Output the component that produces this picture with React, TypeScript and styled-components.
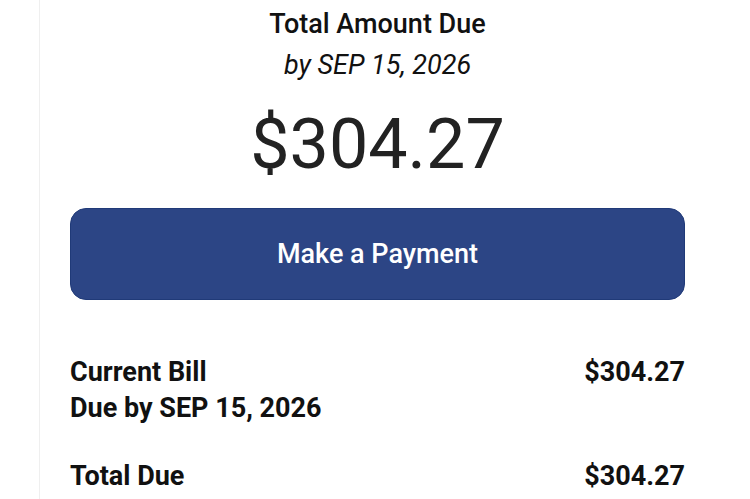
import styled, { createGlobalStyle } from 'styled-components';

const Global = createGlobalStyle`
    html, body {
        margin: 0;
        padding: 0;
        background: #ffffff;
    }
    body {
        font-family: Roboto, "Noto Sans", "Liberation Sans", sans-serif;
        color: #111111;
    }
`;

const Card = styled.div`
    box-sizing: border-box;
    margin-left: 39px;
    width: 676px;
    min-height: 499px;
    border-left: 1px solid #efefef;
    padding: 7px 30px 0 30px;
`;

const Summary = styled.section`
    display: flex;
    flex-direction: column;
    align-items: center;
`;

const Heading = styled.h2`
    margin: 0;
    font-size: 27px;
    font-weight: 500;
    line-height: 34px;
    color: #111;
`;

const DueDate = styled.div`
    margin-top: 8px;
    font-size: 27px;
    font-style: italic;
    line-height: 32px;
    color: #111;
`;

const Amount = styled.div`
    margin-top: 23px;
    font-size: 70px;
    font-weight: 400;
    line-height: 80px;
    color: #222;
`;

const PayButton = styled.button`
    box-sizing: border-box;
    width: 100%;
    height: 92px;
    margin-top: 24px;
    border: 1px solid #203a78;
    border-radius: 16px;
    background: #2c4585;
    color: #ffffff;
    font-family: inherit;
    font-size: 27px;
    font-weight: 500;
    cursor: pointer;
`;

const Details = styled.div`
    display: flex;
    flex-direction: column;
    gap: 32px;
    margin-top: 54px;
`;

const Row = styled.div`
    display: flex;
    justify-content: space-between;
    align-items: flex-start;
`;

const Label = styled.div`
    font-size: 27px;
    font-weight: 700;
    line-height: 36px;
`;

const Value = styled.div`
    font-size: 27px;
    font-weight: 700;
    line-height: 36px;
`;

const App = () => {
    return (
        <>
            <Global />
            <Card>
                <Summary>
                    <Heading>Total Amount Due</Heading>
                    <DueDate>by SEP 15, 2026</DueDate>
                    <Amount>$304.27</Amount>
                </Summary>
                <PayButton>Make a Payment</PayButton>
                <Details>
                    <Row>
                        <Label>
                            Current Bill
                            <br />
                            Due by SEP 15, 2026
                        </Label>
                        <Value>$304.27</Value>
                    </Row>
                    <Row>
                        <Label>Total Due</Label>
                        <Value>$304.27</Value>
                    </Row>
                </Details>
            </Card>
        </>
    );
};

export default App;
